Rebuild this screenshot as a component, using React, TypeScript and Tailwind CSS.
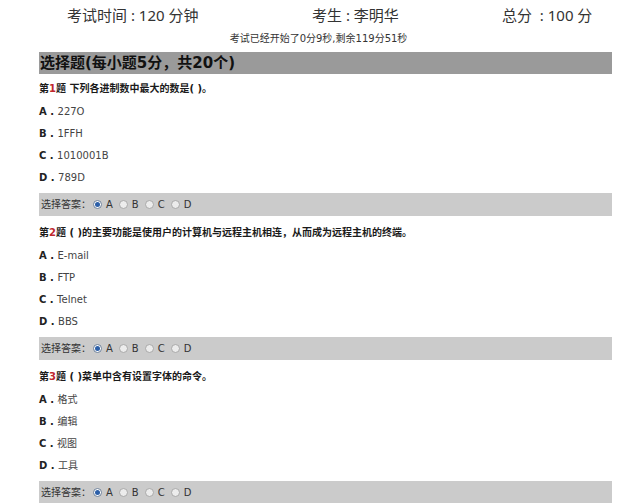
import { useState } from "react";

interface Question {
  id: number
  title: string
  options: string[]
}

const questions: Question[] = [
  { id: 1, title: " 下列各进制数中最大的数是( )。", options: ["227O", "1FFH", "1010001B", "789D"] },
  { id: 2, title: " ( )的主要功能是使用户的计算机与远程主机相连，从而成为远程主机的终端。", options: ["E-mail", "FTP", "Telnet", "BBS"] },
  { id: 3, title: " ( )菜单中含有设置字体的命令。", options: ["格式", "编辑", "视图", "工具"] },
];

const letters = ["A", "B", "C", "D"];

const Radio = ({ checked }: { checked: boolean }) => (
  <span
    className={
      checked
        ? "w-[9px] h-[9px] rounded-full border border-[#6b7f99] bg-white flex items-center justify-center"
        : "w-[9px] h-[9px] rounded-full border border-[#a9a9a9] bg-[#ececec]"
    }
  >
    {checked && <span className="w-[5px] h-[5px] rounded-full bg-[#2c5fa8]" />}
  </span>
);

const QuestionBlock = ({ q }: { q: Question }) => {
  const [answer, setAnswer] = useState("A");
  return (
    <div className="mt-[5px] first:mt-[3px]">
      <div className="h-[22px] flex items-center font-bold text-[#1a1a1a]">
        <span>第</span>
        <span className="text-[#c0272d]">{q.id}</span>
        <span>题</span>
        <span className="whitespace-pre">{q.title}</span>
      </div>
      <div className="mt-[1px]">
        {q.options.map((opt, i) => (
          <div key={i} className="h-[22px] flex items-center text-[#444]">
            <span className="font-bold text-[#222] whitespace-pre">{letters[i]} . </span>
            <span>{opt}</span>
          </div>
        ))}
      </div>
      <div className="mt-[5px] h-[23px] bg-[#cbcbcb] flex items-center pl-[2px] text-[#333]">
        <span>选择答案：</span>
        <div className="flex items-center ml-[2px]">
          {letters.map((l) => (
            <label
              key={l}
              className="flex items-center gap-[4px] mr-[6px] cursor-pointer"
              onClick={() => setAnswer(l)}
            >
              <Radio checked={answer === l} />
              <span>{l}</span>
            </label>
          ))}
        </div>
      </div>
    </div>
  );
};

export default function App() {
  return (
    <div
      className="w-[617px] h-[503px] bg-white overflow-hidden"
      style={{ fontFamily: '"DejaVu Sans", "Noto Sans CJK SC", sans-serif' }}
    >
      <div
        className="h-[30px] flex items-center pl-[67px] text-[15px] text-[#333] whitespace-pre"
        style={{ fontFamily: '"Noto Sans", "Noto Sans CJK SC", sans-serif' }}
      >
        <div className="w-[245px]">考试时间 : 120 分钟</div>
        <div className="w-[190px]">考生 : 李明华</div>
        <div>总分  : 100 分</div>
      </div>
      <div className="ml-[39px] w-[573px] pr-[14px] h-[16px] flex items-center justify-center text-[10px] text-[#333]">
        考试已经开始了0分9秒,剩余119分51秒
      </div>
      <div className="ml-[39px] w-[573px]">
        <div className="mt-[6px] h-[22px] bg-[#9a9a9a] flex items-center pl-[1px] text-[15px] font-bold text-[#111]">
          选择题(每小题5分，共20个)
        </div>
        <div className="text-[10px]">
          {questions.map((q) => (
            <QuestionBlock key={q.id} q={q} />
          ))}
        </div>
      </div>
    </div>
  );
}
